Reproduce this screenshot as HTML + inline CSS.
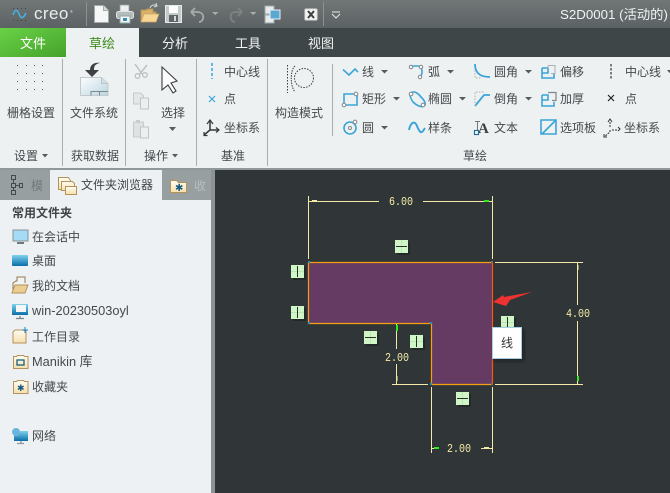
<!DOCTYPE html>
<html><head><meta charset="utf-8">
<style>
html,body{margin:0;padding:0;background:#303637;width:670px;height:493px;overflow:hidden}
svg{display:block;position:absolute;left:0;top:0}
text{font-family:"Liberation Sans","Noto Sans CJK SC",sans-serif;font-size:12px;fill:#46494c}
.m{font-family:"Liberation Mono",monospace;font-size:12px;fill:#f3eaa8}
.l{font-size:12.8px}
.b{stroke:#3aa5d8;stroke-width:1.6;fill:none}
.g{fill:#fff;stroke:#8a8f90;stroke-width:1.100}
.d{fill:#555c60}
.sep{stroke:#a9aeb0;stroke-width:1}
.y{stroke:#f3eaa8;stroke-width:1;fill:none}
</style></head><body>
<svg width="670" height="493" viewBox="0 0 670 493" xmlns="http://www.w3.org/2000/svg">
<defs>
<linearGradient id="tb" x1="0" y1="0" x2="0" y2="1"><stop offset="0" stop-color="#717777"/><stop offset="1" stop-color="#5c6263"/></linearGradient>
<linearGradient id="gr" x1="0" y1="0" x2="1" y2="1"><stop offset="0" stop-color="#69d246"/><stop offset="1" stop-color="#46a22c"/></linearGradient>
<linearGradient id="fo" x1="0" y1="0" x2="0" y2="1"><stop offset="0" stop-color="#fffdf4"/><stop offset="1" stop-color="#f6dfab"/></linearGradient>
<linearGradient id="sc" x1="0" y1="0" x2="0" y2="1"><stop offset="0" stop-color="#7fd2ee"/><stop offset="1" stop-color="#0a6ea8"/></linearGradient>
<linearGradient id="pg" x1="0" y1="0" x2="1" y2="1"><stop offset="0" stop-color="#fdfefe"/><stop offset="1" stop-color="#b9d6e2"/></linearGradient>
<g id="ch" shape-rendering="crispEdges"><rect x="2" y="2" width="13" height="13" fill="#161a1a" opacity=".5"/><rect width="13" height="13" fill="#d0f5c6"/><rect x="6" width="1" height="13" fill="#bde4b4"/><rect x="1" y="6" width="11" height="1" fill="#2b2f2b"/></g>
<g id="cv" shape-rendering="crispEdges"><rect x="2" y="2" width="13" height="13" fill="#161a1a" opacity=".5"/><rect width="13" height="13" fill="#d0f5c6"/><rect y="6" width="13" height="1" fill="#bde4b4"/><rect x="6" y="1" width="1" height="11" fill="#2b2f2b"/></g>
<filter id="s" x="-30%" y="-30%" width="170%" height="170%"><feDropShadow dx="2" dy="2" stdDeviation="1.500" flood-color="#111" flood-opacity=".6"/></filter>
</defs>

<!-- title bar -->
<rect width="670" height="28" fill="url(#tb)"/>
<path d="M13 15c2-6 4-6 6-1s4 5 7-1" fill="none" stroke="#45b4e4" stroke-width="1.500"/>
<g fill="#3f4445"><rect x="13" y="8" width="1" height="1"/><rect x="17" y="8" width="1" height="1"/><rect x="21" y="8" width="1" height="1"/><rect x="25" y="8" width="1" height="1"/><rect x="13" y="20" width="1" height="1"/><rect x="17" y="20" width="1" height="1"/><rect x="21" y="20" width="1" height="1"/><rect x="25" y="20" width="1" height="1"/></g>
<text x="34" y="19" style="font-size:17px;letter-spacing:.4px;fill:#e8eeee">creo</text><text x="70" y="13" style="font-size:4px;fill:#dde">®</text>
<path d="M86.500 2V26" stroke="#8d9292"/>
<path d="M94.500 5.500h9l5 5v12h-14z" fill="#f5f6f6" stroke="#a5a9a9"/><path d="M103.500 5.500v5h5" fill="#d5d9d9" stroke="#a5a9a9"/>
<rect x="120" y="5" width="9" height="7" fill="#eee" stroke="#9aa0a0" stroke-width=".8"/><rect x="116.500" y="11.500" width="17" height="7" rx="2" fill="#b6bbbc" stroke="#dfe2e2"/><rect x="120" y="16" width="10" height="7" fill="#f4f4f4" stroke="#8aa"/><rect x="123" y="18" width="4" height="3" fill="#3a8db5"/>
<path d="M141 21V10h5l1-1h6v3h3l-1 9z" fill="#d8b06a" stroke="#b59557"/><path d="M141 22l3-8h15l-3 8z" fill="#f7d793" stroke="#c9a868" stroke-width=".7"/><path d="M150 8c1-3 5-4 7-2M156 3l1 3-3 1" stroke="#d5dadb" fill="none"/>
<rect x="165.500" y="5.500" width="16" height="17" fill="#c4c9ca" stroke="#e7eaea"/><rect x="169" y="6" width="9" height="7" fill="#fff"/><rect x="169" y="15" width="9" height="7" fill="#5c6568"/><rect x="174" y="16" width="2" height="5" fill="#d5d8d9"/>
<path d="M191 12h6c5 0 7 3 6 7-1 2-2 3-4 3M191 12l4-4M191 12l4 4" fill="none" stroke="#a6abac" stroke-width="1.800"/>
<path d="M212 12h6.500l-3.250 3z" fill="#a9aeae"/>
<path d="M242 12h-6c-5 0-6 3-5 7 1 2 2 3 4 3M242 12l-4-4M242 12l-4 4" fill="none" stroke="#7d8383" stroke-width="1.800"/>
<path d="M250 12h6.500l-3.250 3z" fill="#a9aeae"/>
<rect x="265" y="6" width="9" height="8" fill="#e8eaea" stroke="#9aa"/><rect x="265" y="15" width="9" height="8" fill="#e8eaea" stroke="#9aa"/><rect x="270" y="10" width="10" height="9" fill="#5aa8d0" stroke="#eef"/>
<rect x="305" y="9" width="12" height="11" rx="1" fill="#f2f2f2" stroke="#ddd"/><path d="M308 11l6 7m0-7l-6 7" stroke="#3c3f40" stroke-width="2"/>
<path d="M323.500 2V26" stroke="#8d9292"/>
<path d="M332 12h8M332 14l4 4 4-4" fill="none" stroke="#e5e8e8"/>
<text x="560" y="19" style="font-size:13.300px;fill:#eef2f2">S2D0001 (活动的)</text>

<!-- tabs -->
<rect y="28" width="670" height="29" fill="#3e4647"/>
<rect y="28" width="66" height="29" fill="url(#gr)"/>
<rect x="66" y="28" width="73" height="29" fill="#eef1f2"/>
<text x="33" y="48" text-anchor="middle" style="font-size:13px;fill:#fff">文件</text>
<text x="102" y="48" text-anchor="middle" style="font-size:13px;fill:#3f8a1c">草绘</text>
<text x="175" y="48" text-anchor="middle" style="font-size:13px;fill:#f2f4f4">分析</text>
<text x="248" y="48" text-anchor="middle" style="font-size:13px;fill:#f2f4f4">工具</text>
<text x="321" y="48" text-anchor="middle" style="font-size:13px;fill:#f2f4f4">视图</text>

<!-- ribbon -->
<rect y="57" width="670" height="111" fill="#eef1f2"/>
<rect y="168" width="670" height="2" fill="#90989a"/>
<path class="sep" d="M62.500 59V166M125.500 59V166M196.500 59V166M267.500 59V166M332.500 64V136"/>
<g fill="#5c6165" shape-rendering="crispEdges"><rect x="17" y="65" width="1" height="1"/><rect x="26" y="65" width="1" height="1"/><rect x="34" y="65" width="1" height="1"/><rect x="42" y="65" width="1" height="1"/><rect x="17" y="73" width="1" height="1"/><rect x="26" y="73" width="1" height="1"/><rect x="34" y="73" width="1" height="1"/><rect x="42" y="73" width="1" height="1"/><rect x="17" y="81" width="1" height="1"/><rect x="26" y="81" width="1" height="1"/><rect x="34" y="81" width="1" height="1"/><rect x="42" y="81" width="1" height="1"/><rect x="17" y="89" width="1" height="1"/><rect x="26" y="89" width="1" height="1"/><rect x="34" y="89" width="1" height="1"/><rect x="42" y="89" width="1" height="1"/></g>
<text x="7" y="117">栅格设置</text>
<text x="70" y="117">文件系统</text>
<path d="M80.500 77.500h21l6.500 6v12H80.500z" fill="url(#pg)" stroke="#c4c9cb"/><path d="M101.500 77.500v6h6.500" fill="#cfe0e8" stroke="#bcc4c8"/><path d="M91 95.500v-4h17M99.500 91.500v4" stroke="#7f8a90" fill="none"/>
<path d="M100 63c-5 1-6 3-6 7h5l-7 7-7-7h5c0-5 4-8 10-7z" fill="#3d4143"/>
<text x="14" y="160">设置</text><path d="M42 154h6l-3 3.500z" class="d"/>
<text x="71" y="160">获取数据</text>
<text x="144" y="160">操作</text><path d="M172 154h6l-3 3.500z" class="d"/>
<text x="221" y="160">基准</text>
<text x="463" y="160">草绘</text>

<path d="M135 64l7 10m5-9l-8 10" stroke="#bcc0c2" stroke-width="1.500" fill="none"/><circle cx="137.500" cy="76" r="2.300" fill="none" stroke="#bcc0c2" stroke-width="1.300"/><circle cx="145" cy="75" r="2.300" fill="none" stroke="#bcc0c2" stroke-width="1.300"/>
<path d="M133.500 93h7l3 3v8h-10z" fill="#e4e7e8" stroke="#c6cacb"/><path d="M140.500 98h8v11h-8z" fill="#eceeef" stroke="#c1c5c6"/>
<path d="M133.500 122h10v15h-10z" fill="#dfe2e3" stroke="#c6cacb"/><rect x="136" y="120" width="4" height="3" fill="#ccc"/><path d="M140.500 127h8v11h-8z" fill="#eceeef" stroke="#c1c5c6"/>
<path d="M162 67V90l6-5 5 8 3-2-5-8 6-2z" fill="#fbfcfc" stroke="#3a3e40" stroke-width="1.100"/>
<text x="161" y="117">选择</text><path d="M169 127h7l-3.500 4z" class="d"/>

<path d="M212 63V79" stroke="#2e9fd8" stroke-width="1.400" stroke-dasharray="3 2"/>
<text x="224" y="76">中心线</text>
<path d="M209 96l6 6m0-6l-6 6" stroke="#36a3dc" stroke-width="1.200"/><text x="224" y="103">点</text>
<path d="M210 121v9l-6 5m6-5h8" fill="none" stroke="#34383a" stroke-width="1.500"/><path d="M207 124l3-4 3 4M216 127.500l3 2.500-3 2.500M204 132v3.500h3.500" fill="none" stroke="#34383a" stroke-width="1.200"/>
<text x="224" y="132">坐标系</text>

<path d="M287.500 65v28" stroke="#3a3e40" stroke-dasharray="1.500 1.500"/>
<path d="M295 66c-5 4-5 20 0 26" fill="none" stroke="#3a3e40" stroke-dasharray="1.500 1"/>
<circle cx="304" cy="78" r="9.500" fill="none" stroke="#3a3e40" stroke-dasharray="1.500 1.300"/>
<text x="275" y="117">构造模式</text>

<!-- right ribbon icons -->
<path class="b" d="M343 69.500l6 5.500 6-6 3 3"/>
<text x="362" y="76">线</text><path d="M381 70h7l-3.500 3.500z" class="d"/>
<path class="b" d="M412 66h6c4 0 5 6 3 10" /><circle class="g" cx="411" cy="67" r="1.700"/><circle class="g" cx="421" cy="67" r="1.700"/><circle class="g" cx="420" cy="77" r="1.700"/>
<text x="428" y="76">弧</text><path d="M447 70h7l-3.500 3.500z" class="d"/>
<path d="M475 64c0 8 4 13 15 13" fill="none" stroke="#3aa5d8" stroke-width="1.800"/><path d="M475 70v8h7" fill="none" stroke="#a8adaf" stroke-dasharray="1.500 1.500"/>
<text x="494" y="76">圆角</text><path d="M525 70h7l-3.500 3.500z" class="d"/>
<path class="b" d="M542 68v10h12v-4M542 73h6v-5h-6"/><path d="M548 65.500h7v8h-4M548 66v3" stroke="#aab0b2" fill="none"/>
<text x="560" y="76">偏移</text>
<path d="M611 64V80" stroke="#333" stroke-width="1.200" stroke-dasharray="2.500 1.500"/>
<text x="625" y="76">中心线</text><path d="M667 70h5l-2.500 3z" class="d"/>

<path class="b" d="M344 94h13v11h-13z"/><circle class="g" cx="356" cy="94" r="1.800"/><circle class="g" cx="344" cy="105" r="1.800"/>
<text x="362" y="103">矩形</text><path d="M393 97h7l-3.500 3.500z" class="d"/>
<path class="b" d="M411 93c3-3 8 1 10 4 3 3 6 7 3 9-3 2-8-1-11-4-2-3-4-7-2-9z"/><circle class="g" cx="411" cy="94" r="1.800"/><circle class="g" cx="423" cy="105" r="1.800"/>
<text x="428" y="103">椭圆</text><path d="M459 97h7l-3.500 3.500z" class="d"/>
<path d="M475 106l9-11h6" fill="none" stroke="#3aa5d8" stroke-width="1.800"/><path d="M475 106V92h9" fill="none" stroke="#a8adaf" stroke-dasharray="1.500 1.500"/>
<text x="494" y="103">倒角</text><path d="M525 97h7l-3.500 3.500z" class="d"/>
<path class="b" d="M542 95v11h12v-4M542 100h6v-5h-6"/><path d="M548 92.500h8v8h-4" stroke="#7f878a" fill="none" stroke-width="1.200"/>
<text x="560" y="103">加厚</text>
<path d="M608 95l6 6m0-6l-6 6" stroke="#222" stroke-width="1.200"/>
<text x="625" y="103">点</text>

<circle class="b" cx="350" cy="128" r="6" stroke-width="2"/><circle cx="350" cy="128" r="1.500" fill="#fff" stroke="#888"/><circle class="g" cx="355" cy="122" r="1.800"/>
<text x="362" y="132">圆</text><path d="M381 126h7l-3.500 3.500z" class="d"/>
<path d="M409 130c2-9 6-9 8-4s4 8 6 5l2-3" fill="none" stroke="#3aa5d8" stroke-width="2"/>
<text x="428" y="132">样条</text>
<text x="478" y="133" style="font-family:'Liberation Serif',serif;font-size:15px;font-weight:bold;fill:#3a3e40">A</text><path d="M475 121.500h5M477.500 122v8" stroke="#777" fill="none"/><rect x="474.500" y="130.500" width="4" height="4" fill="#fff" stroke="#1f6f9c" stroke-width="1.200"/>
<text x="494" y="132">文本</text>
<path class="b" d="M541 120h15v14h-15z" stroke-width="1.700"/><path d="M542 134l14-14" stroke="#3aa5d8" stroke-width="1.700"/>
<text x="560" y="132">选项板</text>
<path d="M610 122v6m0 2v2l-6 5m8-7h5" fill="none" stroke="#333" stroke-dasharray="2 1"/><path d="M608 122l2-3 2 3M618 127l2 2-2 2M604 134v3h3" fill="none" stroke="#333"/>
<text x="624" y="132">坐标系</text>

<!-- left panel -->
<rect y="170" width="212" height="323" fill="#edf1f3"/>
<rect y="170" width="212" height="30" fill="#979fa1"/>
<rect x="50" y="170" width="112" height="30" fill="#edf1f3"/>
<rect x="211" y="170" width="4" height="323" fill="#8b9395"/>
<path d="M11.500 175.500h4v4h-4zM11.500 183.500h4v4h-4zM11.500 190.500h4v4h-4zM19.500 183.500h3v4h-3zM13.500 180v3M13.500 188v3M16 185.500h3" fill="none" stroke="#454b4d"/>
<text x="31" y="190" style="fill:#74797b">模</text>
<path d="M58.500 177.500h10l2 3v9h-12z" fill="url(#fo)" stroke="#b5915c"/><path d="M61.500 181.500h11l2 2v7h-13z" fill="url(#fo)" stroke="#b5915c"/><path d="M65.500 186.500h11v8h-11z" fill="url(#fo)" stroke="#b5915c"/>
<text x="81" y="189" style="fill:#404548">文件夹浏览器</text>
<path d="M170.500 180.500h6l2 2h8v10h-16z" fill="url(#fo)" stroke="#b5915c"/><text x="175" y="191" style="font-size:10px;fill:#15587e">✱</text>
<text x="194" y="190" style="fill:#b9bfc0">收</text>

<text x="12" y="217" style="font-weight:bold;fill:#3f4446">常用文件夹</text>
<rect x="13" y="230" width="15" height="11" fill="#a3dcf4" stroke="#8a9296"/><path d="M17 243h7" stroke="#70787c" stroke-width="2"/>
<text x="32" y="241">在会话中</text>
<rect x="12" y="255" width="16" height="11" fill="url(#sc)" rx="1"/>
<text x="32" y="265">桌面</text>
<path d="M13 291v-8l3-2h1v-4h8v6" fill="#f0f3f4" stroke="#96794e"/><path d="M12 293l3-8h13l-3 8z" fill="#eccd92" stroke="#b5915c"/>
<text x="32" y="290">我的文档</text>
<rect x="12" y="304" width="16" height="11" fill="url(#sc)"/><rect x="16" y="305" width="10" height="7" fill="#f6f6f6"/><path d="M20 316v2M16 318.500h8" stroke="#7a8488" stroke-width="1.300"/>
<text class="l" x="32" y="315">win-20230503oyl</text>
<path d="M13 343v-11l2-2h8l3 1v12z" fill="url(#fo)" stroke="#b5915c"/><path d="M25 327v6m-3-3h6" stroke="#1b84c2"/>
<text x="32" y="341">工作目录</text>
<path d="M13.500 356.500h3l1-1h6l1 1h3.500v12h-14.500z" fill="url(#fo)" stroke="#b5915c"/><rect x="17" y="360" width="7" height="5" fill="none" stroke="#15607f" stroke-width="1.300"/>
<text class="l" x="32" y="366">Manikin 库</text>
<path d="M13.500 381.500h3l1-1h6l1 1h3.500v12h-14.500z" fill="url(#fo)" stroke="#b5915c"/><text x="17" y="391" style="font-size:9px;fill:#15587e">✱</text>
<text x="32" y="391">收藏夹</text>
<rect x="14" y="431" width="14" height="10" fill="url(#sc)"/><circle cx="16" cy="432" r="4" fill="#6cb4de"/><path d="M21 441v2M17 443.500h7" stroke="#8c979c" stroke-width="1.200"/>
<text x="32" y="440">网络</text>

<!-- canvas -->
<rect x="215" y="170" width="455" height="323" fill="#303637"/>
<path d="M431.500 323.500V384.500H492.500V262.500H308.500V323.500z" fill="#663b63"/>
<path d="M492.500 262.500H308.500V323.500H431.500V384.500H492.500" fill="none" stroke="#f5a013" stroke-width="1.200"/>
<path d="M492.500 262.500V384.500" stroke="#ff5310" stroke-width="1.200"/>
<g fill="#2790b0"><rect x="308" y="261" width="2" height="2"/><rect x="308" y="322" width="2" height="2"/><rect x="430" y="322" width="2" height="2"/><rect x="430" y="383" width="2" height="2"/></g>
<g fill="#707070"><rect x="491" y="261" width="2" height="2"/><rect x="491" y="383" width="2" height="2"/></g>

<!-- dims -->
<path class="y" d="M308.500 196V259M492.500 196V259M309 201.500H379M423 201.500H492"/>
<rect x="312" y="200" width="5" height="2" fill="#f3eaa8"/><rect x="484" y="200" width="5" height="2" fill="#2fe81e"/>
<text class="m" x="389" y="205" textLength="24" lengthAdjust="spacingAndGlyphs">6.00</text>
<path class="y" d="M495 262.500H583M577.500 263V305M577.500 321V384"/>
<rect x="577" y="265" width="1.500" height="5" fill="#f3eaa8"/><rect x="577" y="376" width="2" height="5" fill="#2fe81e"/>
<text class="m" x="566" y="317" textLength="24" lengthAdjust="spacingAndGlyphs">4.00</text>
<path class="y" d="M396.500 324V349M396.500 364V384M392 384.500H428M495 384.500H583M431.500 387V453M492.500 387V453M432 448.500H437M481 448.500H492"/>
<rect x="396" y="325" width="2" height="6" fill="#2fe81e"/><rect x="396" y="376" width="1.500" height="5" fill="#f3eaa8"/>
<text class="m" x="385" y="361" textLength="24" lengthAdjust="spacingAndGlyphs">2.00</text>
<rect x="434" y="447" width="5" height="2" fill="#2fe81e"/><rect x="484" y="447" width="5" height="2" fill="#f3eaa8"/>
<text class="m" x="447" y="452" textLength="24" lengthAdjust="spacingAndGlyphs">2.00</text>

<!-- constraints -->
<use href="#ch" x="395" y="240"/>
<use href="#cv" x="291" y="265"/>
<use href="#cv" x="291" y="306"/>
<use href="#ch" x="364" y="331"/>
<use href="#cv" x="410" y="335"/>
<use href="#cv" x="501" y="316"/>
<use href="#ch" x="456" y="392"/>

<!-- arrow -->
<path d="M493 302L503 295L504 297L532 292L510 300L506 306z" fill="#ee3231"/>

<!-- tooltip -->
<rect x="492.500" y="327.500" width="29" height="31" fill="#fff" stroke="#a9cde4" filter="url(#s)"/>
<text x="501" y="347" style="fill:#333">线</text>
</svg>
</body></html>
